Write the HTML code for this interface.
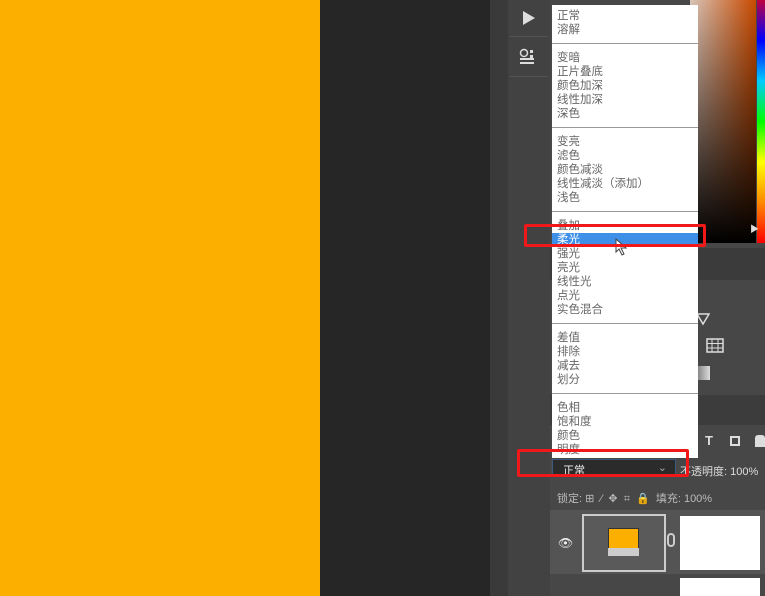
<!DOCTYPE html>
<html><head><meta charset="utf-8"><style>
*{margin:0;padding:0;box-sizing:border-box}
body{width:765px;height:596px;overflow:hidden;position:relative;background:#262626;font-family:"Liberation Sans","Noto Sans CJK SC",sans-serif}
.a{position:absolute}
.menu{left:552px;top:5px;width:146px;height:453px;background:#fff;font-size:11.5px;line-height:14px;color:#666}
.menu div.i{padding-left:5px;height:14px}
.sep{height:1px;background:#999;margin:6px 0 7px 0}
</style></head><body>
<div class="a" style="left:0;top:0;width:320px;height:596px;background:#fdaf00"></div>
<div class="a" style="left:490px;top:0;width:18px;height:596px;background:#3a3a3a"></div>
<div class="a" style="left:508px;top:0;width:42px;height:596px;background:#424242"></div>
<div class="a" style="left:510px;top:36px;width:38px;height:1px;background:#555"></div>
<div class="a" style="left:510px;top:76px;width:38px;height:1px;background:#555"></div>
<svg class="a" style="left:521px;top:9px" width="16" height="18"><path d="M2 2 L14 9 L2 16Z" fill="#ddd"/></svg>
<svg class="a" style="left:519px;top:48px" width="18" height="18"><circle cx="5" cy="5" r="3.5" fill="none" stroke="#ddd" stroke-width="1.5"/><rect x="11" y="2" width="3" height="3" fill="#ddd"/><rect x="11" y="7" width="3" height="3" fill="#ddd"/><rect x="1" y="10" width="14" height="2" fill="#ddd"/><rect x="1" y="14" width="14" height="2" fill="#ddd"/></svg>
<div class="a" style="left:550px;top:0;width:215px;height:596px;background:#474747"></div>
<div class="a" style="left:550px;top:248px;width:215px;height:32px;background:#3b3b3b"></div>
<div class="a" style="left:550px;top:395px;width:215px;height:30px;background:#3c3c3c"></div>
<div class="a" style="left:550px;top:425px;width:215px;height:171px;background:#474747"></div>
<div class="a" style="left:690px;top:0;width:66px;height:243px;background:linear-gradient(to bottom,rgba(0,0,0,0),#000),linear-gradient(to right,#d8c4b8,#c84a00)"></div>
<div class="a" style="left:757px;top:0;width:8px;height:243px;background:linear-gradient(to bottom,#c00040,#00f,#0cf,#0f0,#ff0,#f80,#f00)"></div>
<div class="a" style="left:750px;top:222px;color:#ddd;font-size:9px">▶</div>
<svg class="a" style="left:696px;top:312px" width="14" height="14"><path d="M1 2 L13 2 L7 12Z" fill="none" stroke="#ddd" stroke-width="1.5"/></svg>
<svg class="a" style="left:706px;top:338px" width="18" height="16"><rect x="1" y="1" width="16" height="13" fill="none" stroke="#ddd" stroke-width="1.5"/><path d="M6 1V14M12 1V14M1 5.5H17M1 10H17" stroke="#ddd"/></svg>
<div class="a" style="left:698px;top:366px;width:12px;height:14px;background:linear-gradient(to right,#888,#ddd)"></div>
<div class="a" style="left:705px;top:433px;color:#ddd;font-size:13px;font-weight:bold">T</div>
<div class="a" style="left:730px;top:436px;width:10px;height:10px;border:2px solid #ddd"></div>
<div class="a" style="left:755px;top:435px;width:10px;height:12px;background:#ddd;border-radius:3px 3px 0 0"></div>
<div class="menu a">
<div style="height:4px"></div>
<div class="i">正常</div><div class="i">溶解</div>
<div class="sep"></div>
<div class="i">变暗</div><div class="i">正片叠底</div><div class="i">颜色加深</div><div class="i">线性加深</div><div class="i">深色</div>
<div class="sep"></div>
<div class="i">变亮</div><div class="i">滤色</div><div class="i">颜色减淡</div><div class="i">线性减淡（添加）</div><div class="i">浅色</div>
<div class="sep"></div>
<div class="i">叠加</div><div class="i" style="background:#3d8fe8;color:#fff">柔光</div><div class="i">强光</div><div class="i">亮光</div><div class="i">线性光</div><div class="i">点光</div><div class="i">实色混合</div>
<div class="sep"></div>
<div class="i">差值</div><div class="i">排除</div><div class="i">减去</div><div class="i">划分</div>
<div class="sep"></div>
<div class="i">色相</div><div class="i">饱和度</div><div class="i">颜色</div><div class="i">明度</div>
</div>
<svg class="a" style="left:615px;top:238px" width="14" height="20"><path d="M1 1 L1 14 L4 11 L7 17 L9 16 L6 10 L11 10Z" fill="#fff" stroke="#444"/></svg>
<div class="a" style="left:552px;top:459px;width:124px;height:18px;background:#2b2b2b;border:1px solid #3a5a80;color:#eee;font-size:11px;padding:2px 0 0 10px">正常<span style="position:absolute;right:8px;top:1px;color:#aaa">⌄</span></div>
<div class="a" style="left:680px;top:463px;color:#ddd;font-size:11px;white-space:nowrap">不透明度: 100%</div>
<div class="a" style="left:557px;top:490px;color:#bbb;font-size:11px;white-space:nowrap">锁定: ⊞ &nbsp;∕ &nbsp;✥ &nbsp;⌗ &nbsp;🔒&nbsp; 填充: 100%</div>
<div class="a" style="left:550px;top:510px;width:215px;height:64px;background:#545454"></div>
<div class="a" style="left:558px;top:536px;color:#eee;font-size:12px">👁</div>
<div class="a" style="left:582px;top:514px;width:84px;height:58px;border:2px solid #ccc;background:#5a5a5a"></div>
<div class="a" style="left:608px;top:528px;width:31px;height:28px;background:#fdaf00;border:1px solid #333"></div>
<div class="a" style="left:608px;top:548px;width:31px;height:8px;background:#ccc"></div>
<div class="a" style="left:667px;top:533px;width:8px;height:14px;border:2px solid #ccc;border-radius:4px"></div>
<div class="a" style="left:680px;top:516px;width:80px;height:54px;background:#fff"></div>
<div class="a" style="left:680px;top:578px;width:80px;height:18px;background:#fff"></div>
<div class="a" style="left:524px;top:224px;width:182px;height:23px;border:3px solid #f01818;border-radius:2px"></div>
<div class="a" style="left:517px;top:449px;width:172px;height:28px;border:3px solid #f01818;border-radius:2px"></div>
</body></html>
